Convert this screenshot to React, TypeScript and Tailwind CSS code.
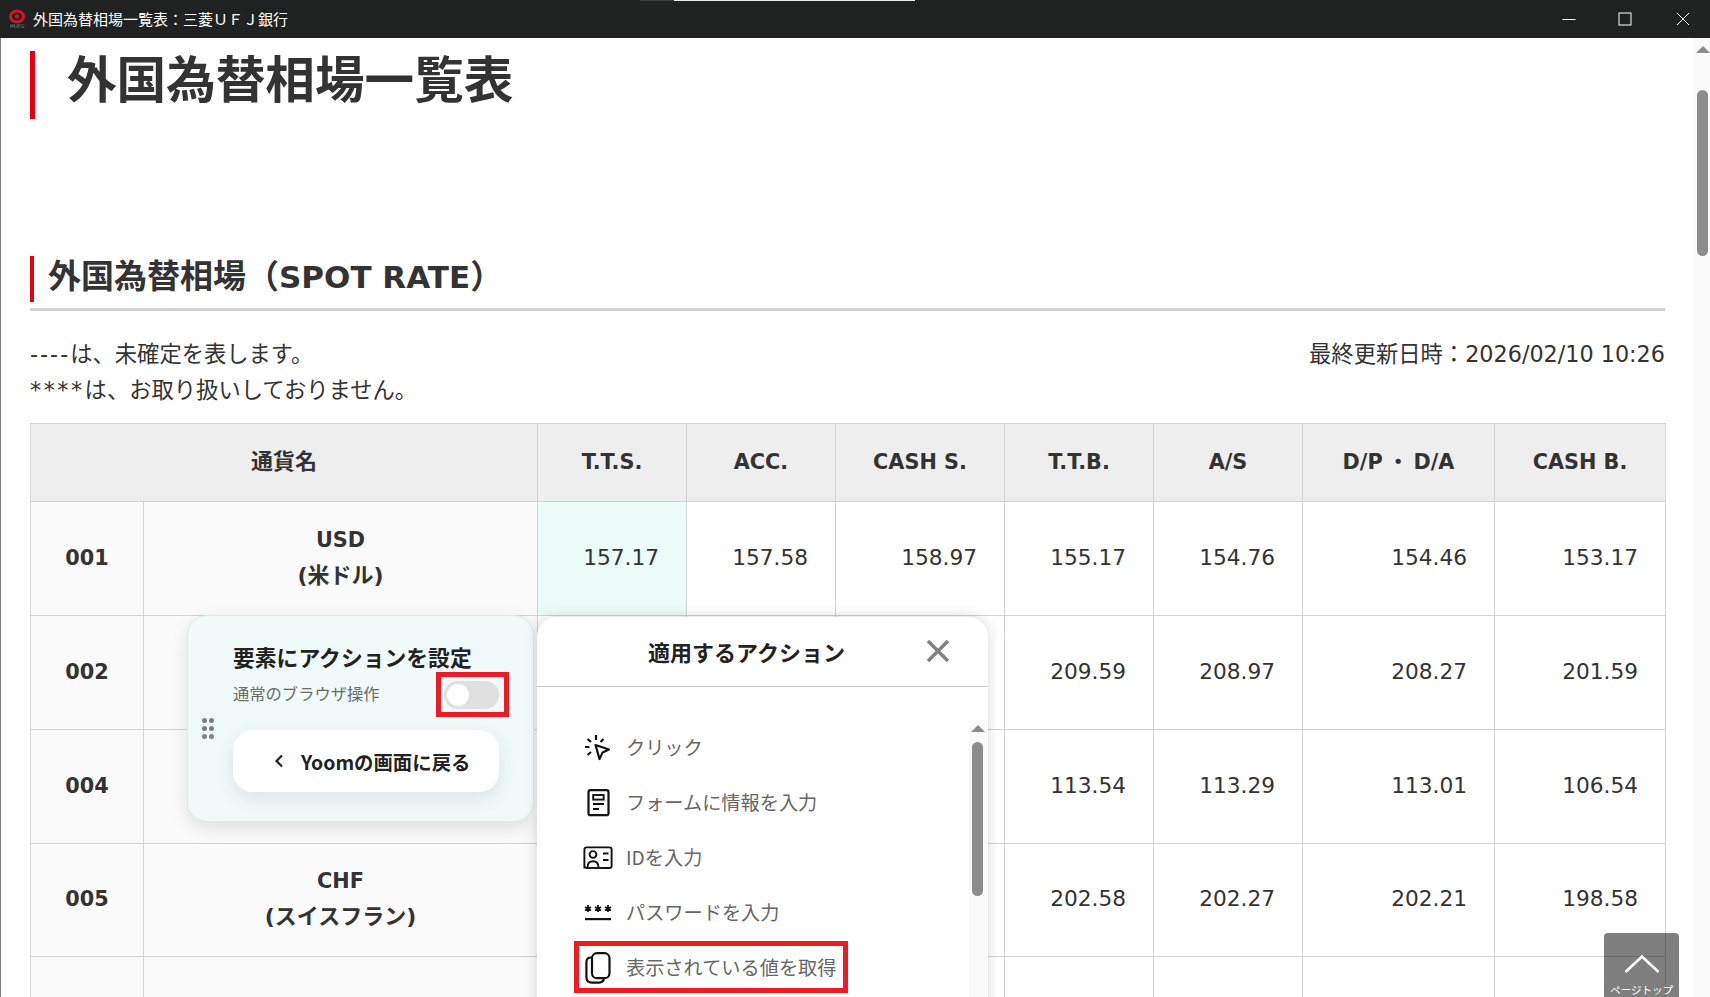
import React from 'react';

const PAGE_FONT = "font-['DejaVu_Sans','Noto_Sans_CJK_JP',sans-serif]";
const WIDGET_FONT = "font-['Noto_Sans_CJK_JP','Noto_Sans',sans-serif]";

const rows = [
  { code: '001', name: 'USD', sub: '(米ドル)', height: 'h-[114px]', rates: ['157.17', '157.58', '158.97', '155.17', '154.76', '154.46', '153.17'] },
  { code: '002', name: '', sub: '', height: 'h-[114px]', rates: ['', '', '', '209.59', '208.97', '208.27', '201.59'] },
  { code: '004', name: '', sub: '', height: 'h-[114px]', rates: ['', '', '', '113.54', '113.29', '113.01', '106.54'] },
  { code: '005', name: 'CHF', sub: '(スイスフラン)', height: 'h-[113px]', rates: ['', '', '', '202.58', '202.27', '202.21', '198.58'] },
  { code: '', name: 'SEK', sub: '', height: 'h-[114px]', rates: ['', '', '', '', '', '', ''] },
];

const heads: { key: string; label: React.ReactNode }[] = [
  { key: 'tts', label: 'T.T.S.' },
  { key: 'acc', label: 'ACC.' },
  { key: 'cashs', label: 'CASH S.' },
  { key: 'ttb', label: 'T.T.B.' },
  { key: 'as', label: 'A/S' },
  { key: 'dp', label: <>D/P<span className="mx-[5px]">・</span>D/A</> },
  { key: 'cashb', label: 'CASH B.' },
];

const cellBorder = 'border border-[#d4d4d4]';

// Title bar of the browser popup
const TitleBar = () => (
  <div className="relative flex h-[38px] shrink-0 items-center bg-[#202222] pl-[8px] text-white">
    <div className="absolute left-[640px] top-0 h-px w-[34px] bg-[#3d3d3d]" />
    <div className="absolute left-[674px] top-0 h-px w-[241px] bg-[#e8e8e8]" />
    <svg width="19" height="22" viewBox="0 0 19 22" className="shrink-0">
      <ellipse cx="9" cy="8.5" rx="6.5" ry="5.6" fill="none" stroke="#d8121f" strokeWidth="3" />
      <circle cx="9" cy="8.5" r="2" fill="#d8121f" />
      <text x="9" y="20" textAnchor="middle" fontSize="5" fill="#7a7a7a">MUFG</text>
    </svg>
    <span className={`ml-[6px] pb-[1px] text-[15px] leading-none ${WIDGET_FONT}`}>外国為替相場一覧表：三菱ＵＦＪ銀行</span>
    <div className="ml-auto flex items-center">
      <svg width="14" height="14" viewBox="0 0 14 14" className="mr-[42px]">
        <path d="M0.5 7.5H13.5" stroke="#fff" strokeWidth="1" />
      </svg>
      <svg width="14" height="14" viewBox="0 0 14 14" className="mr-[44px]">
        <rect x="1" y="1" width="12" height="12" fill="none" stroke="#fff" strokeWidth="1" />
      </svg>
      <svg width="14" height="14" viewBox="0 0 14 14" className="mr-[20px]">
        <path d="M1 1L13 13M13 1L1 13" stroke="#fff" strokeWidth="1" />
      </svg>
    </div>
  </div>
);

const RateTable = () => (
  <table className="w-[1635px] table-fixed border-collapse text-[21.7px] text-[#333]">
    <colgroup>
      <col className="w-[113px]" />
      <col className="w-[394px]" />
      <col className="w-[149px]" />
      <col className="w-[149px]" />
      <col className="w-[169px]" />
      <col className="w-[149px]" />
      <col className="w-[149px]" />
      <col className="w-[192px]" />
      <col className="w-[171px]" />
    </colgroup>
    <thead>
      <tr className="h-[78px] bg-[#eeeeee]">
        <th colSpan={2} className={`${cellBorder} pb-[2px] text-[22px] font-bold`}>通貨名</th>
        {heads.map((h) => (
          <th key={h.key} className={`${cellBorder} text-[20.8px] font-bold`}>{h.label}</th>
        ))}
      </tr>
    </thead>
    <tbody>
      {rows.map((r) => (
        <tr key={r.name + r.code} className={r.height}>
          <td className={`${cellBorder} bg-[#fafafa] text-center text-[20.8px] font-bold`}>{r.code}</td>
          <td className={`${cellBorder} bg-[#fafafa] pb-[2px] text-center align-middle text-[22px] font-bold leading-[36px]`}>
            <div className="text-[20.8px]">{r.name}</div>
            {r.sub && <div>{r.sub}</div>}
          </td>
          {r.rates.map((v, i) => (
            <td
              key={i}
              className={`${cellBorder} pb-[1px] pr-[27px] text-right ${r.code === '001' && i === 0 ? 'bg-[#ebfbf8]' : 'bg-white'}`}
            >
              {v}
            </td>
          ))}
        </tr>
      ))}
    </tbody>
  </table>
);

// Left floating card
const SettingCard = () => (
  <div className={`absolute left-[186px] top-[577px] h-[207px] w-[347px] rounded-[20px] border border-[#e2e8e7] bg-[#f0faf9] shadow-[0_6px_18px_rgba(0,0,0,0.1)] ${WIDGET_FONT}`}>
    <div className="absolute left-[14px] top-[102px] grid w-[11px] grid-cols-2 gap-x-[3px] gap-y-[3px]">
      {[0, 1, 2, 3, 4, 5].map((d) => (
        <span key={d} className="h-[5px] w-[5px] rounded-full bg-[#808080]" />
      ))}
    </div>
    <div className="flex flex-col pl-[45px] pr-[34px] pt-[25px]">
      <div className="text-[21.8px] font-bold leading-[32px] text-[#222]">要素にアクションを設定</div>
      <div className="mt-[8px] flex h-[28px] items-center justify-between">
        <span className="pb-[4px] text-[16.3px] leading-none text-[#6b6b6b]">通常のブラウザ操作</span>
        <span className="relative flex h-[28px] w-[55px] items-center rounded-full bg-[#e0e0e0] pl-[3px]">
          <span className="h-[22px] w-[22px] rounded-full bg-white" />
        </span>
      </div>
      <div className="mt-[21px] flex h-[62px] items-center rounded-[20px] bg-white pl-[40px] shadow-[0_6px_20px_rgba(0,60,60,0.1)]">
        <svg width="12" height="16" viewBox="0 0 12 16" className="shrink-0">
          <path d="M9 2.5L3.5 8L9 13.5" fill="none" stroke="#222" strokeWidth="2.2" />
        </svg>
        <span className="ml-[16px] pt-[2px] text-[19.4px] font-bold leading-none text-[#222]">Yoomの画面に戻る</span>
      </div>
    </div>
    <div className="absolute left-[248px] top-[56px] h-[45px] w-[73px] border-[5px] border-[#ed1c24]" />
  </div>
);

const ClickIcon = () => (
  <svg width="28" height="28" viewBox="0 0 28 28" fill="none" stroke="#111" strokeWidth="2.2">
    <path d="M12 1V6M3.5 5L7 8M1 13H5.5M3.5 21L7 18M19.5 5L16.5 8" />
    <path d="M11.5 11L25 15.5L18.6 18.4L15.5 25Z" strokeLinejoin="round" />
  </svg>
);

const FormIcon = () => (
  <svg width="28" height="28" viewBox="0 0 28 28" fill="none" stroke="#111" strokeWidth="2.2">
    <rect x="4.5" y="1.2" width="20" height="25" rx="2" />
    <rect x="9.2" y="6" width="10.5" height="4.6" strokeWidth="1.9" />
    <path d="M9 15H20M9 20H15" />
  </svg>
);

const IdIcon = () => (
  <svg width="30" height="24" viewBox="0 0 30 24" fill="none" stroke="#111" strokeWidth="1.9">
    <path d="M3 21.5H1.4V3.5Q1.4 1.4 3.5 1.4H26.5Q28.6 1.4 28.6 3.5V20Q28.6 22 26.5 22H20" />
    <path d="M20 22H3" />
    <circle cx="10" cy="8.5" r="3.4" />
    <path d="M4.5 21.5Q4.5 15.2 10 15.2Q15.5 15.2 15.5 21.5" />
    <path d="M20 7.5H25.5M20 14H25.5" />
  </svg>
);

const PasswordIcon = () => (
  <svg width="28" height="18" viewBox="0 0 28 18">
    <g stroke="#111" strokeWidth="1.7">
      <path d="M4 1V8M1 3L7 6.5M7 3L1 6.5" />
      <path d="M14 1V8M11 3L17 6.5M17 3L11 6.5" />
      <path d="M24 1V8M21 3L27 6.5M27 3L21 6.5" />
    </g>
    <rect x="1" y="14" width="26" height="2.2" fill="#111" />
  </svg>
);

const CopyIcon = () => (
  <svg width="26" height="32" viewBox="0 0 26 32" fill="none" stroke="#111" strokeWidth="2.2">
    <rect x="7" y="1.2" width="17.5" height="25" rx="5" />
    <path d="M7 5.5H6Q1.4 5.5 1.4 10V25Q1.4 30.6 7 30.6H14Q18.5 30.6 19 26.2" />
  </svg>
);

const actions = [
  { label: 'クリック', icon: <ClickIcon /> },
  { label: 'フォームに情報を入力', icon: <FormIcon /> },
  { label: 'IDを入力', icon: <IdIcon /> },
  { label: 'パスワードを入力', icon: <PasswordIcon /> },
  { label: '表示されている値を取得', icon: <CopyIcon /> },
];

// Right floating panel, runs off the bottom of the window
const ActionPanel = () => (
  <div className={`absolute left-[536px] top-[579px] h-[420px] w-[451px] rounded-t-[20px] bg-white shadow-[0_0_14px_rgba(0,0,0,0.16)] ${WIDGET_FONT}`}>
    <div className="relative flex h-[70px] items-center border-b border-[#c8c8c8] pl-[111px]">
      <span className="pb-[1px] text-[22px] font-bold text-[#222]">適用するアクション</span>
      <svg width="24" height="24" viewBox="0 0 24 24" className="absolute left-[389px] top-[22px]">
        <path d="M2 2L22 22M22 2L2 22" stroke="#808080" strokeWidth="3.4" />
      </svg>
    </div>
    <div className="flex flex-col pl-[44px] pt-[33px]">
      {actions.map((a) => (
        <div key={a.label} className="flex h-[55px] items-center">
          <span className="flex w-[45px] shrink-0 items-center justify-center pr-[11px]">{a.icon}</span>
          <span className="text-[19.2px] leading-none text-[#666]">{a.label}</span>
        </div>
      ))}
    </div>
    <div className="absolute bottom-0 right-0 top-[103px] w-[19px] bg-[#fafafa]">
      <div className="ml-[2px] mt-[5px] h-0 w-0 border-x-[7px] border-b-[7px] border-x-transparent border-b-[#8c8c8c]" />
      <div className="ml-[3px] mt-[10px] h-[154px] w-[11px] rounded-full bg-[#8c8c8c]" />
    </div>
    <div className="absolute left-[37px] top-[324px] h-[52px] w-[274px] border-[5px] border-[#ed1c24]" />
  </div>
);

const PageScrollbar = () => (
  <div className="w-[17px] shrink-0 bg-[#fafafa]">
    <div className="ml-[3px] mt-[8px] h-0 w-0 border-x-[7px] border-b-[7px] border-x-transparent border-b-[#8c8c8c]" />
    <div className="ml-[4px] mt-[37px] h-[166px] w-[11px] rounded-full bg-[#8c8c8c]" />
  </div>
);

export default function App() {
  return (
    <div className={`flex h-[997px] w-full flex-col overflow-hidden bg-white ${PAGE_FONT}`}>
      <TitleBar />
      <div className="relative flex min-h-0 flex-1 border-l border-[#808080]">
        <main className="min-w-0 flex-1 pl-[29px] text-[#333]">
          <div className="mt-[13px] flex h-[68px] items-center border-l-[5px] border-[#e60012] pl-[32px]">
            <h1 className="pb-[6px] text-[49.6px] font-bold leading-none">外国為替相場一覧表</h1>
          </div>
          <div className="mt-[137px] w-[1635px] border-b-[3px] border-[#d4d4d4] pb-[6px]">
            <h2 className="flex h-[46px] items-center border-l-[4px] border-[#e60012] pb-[4px] pl-[14px] text-[33px] font-bold">
              外国為替相場（<span className="text-[31px]">SPOT RATE</span>）
            </h2>
          </div>
          <div className="mt-[25px] flex w-[1635px] justify-between text-[22.3px] leading-[36px]">
            <div>
              <p><span className="tracking-[2px]">----</span>は、未確定を表します。</p>
              <p><span className="tracking-[2.5px]">****</span>は、お取り扱いしておりません。</p>
            </div>
            <p>最終更新日時：2026/02/10 10:26</p>
          </div>
          <div className="mt-[15px]">
            <RateTable />
          </div>
        </main>
        <PageScrollbar />
        <SettingCard />
        <ActionPanel />
        <div className="absolute left-[1603px] top-[895px] flex h-[75px] w-[75px] flex-col items-center rounded-[4px] bg-black/50 pt-[21px] text-white">
          <svg width="36" height="20" viewBox="0 0 36 20">
            <path d="M1.5 18L18 2.5L34.5 18" fill="none" stroke="#fff" strokeWidth="2.6" />
          </svg>
          <span className={`mt-[11px] whitespace-nowrap text-[10.5px] leading-none ${WIDGET_FONT}`}>ページトップ</span>
        </div>
      </div>
    </div>
  );
}
